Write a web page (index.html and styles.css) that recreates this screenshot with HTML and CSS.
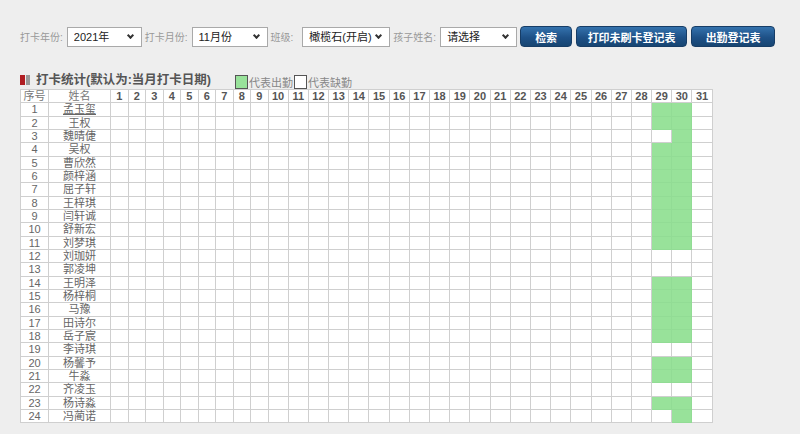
FILE: index.html
```html
<!DOCTYPE html>
<html lang="zh-CN">
<head>
    <meta charset="UTF-8">
    <title>打卡统计</title>
    <link rel="stylesheet" href="styles.css">
</head>
<body>
    <div class="page">
        <div class="search-bar">
            <label>打卡年份:</label>
            <span class="sel sel-year"><select><option>2021年</option></select></span>
            <label>打卡月份:</label>
            <span class="sel sel-month"><select><option>11月份</option></select></span>
            <label class="lbl-class">班级:</label>
            <span class="sel sel-class"><select><option>橄榄石(开启)</option></select></span>
            <label>孩子姓名:</label>
            <span class="sel sel-child"><select><option>请选择</option></select></span>
            <button class="btn btn-search">检索</button>
            <button class="btn btn-print">打印未刷卡登记表</button>
            <button class="btn btn-sheet">出勤登记表</button>
        </div>
        <div class="title-row">
            <span class="title-icon"><i class="red"></i><i class="gray"></i></span>
            <span class="title">打卡统计(默认为:当月打卡日期)</span>
            <span class="legend"><i class="box box-on"></i>代表出勤</span>
            <span class="legend"><i class="box"></i>代表缺勤</span>
        </div>
        <table class="stat" id="stat">
            <thead><tr id="headRow"><th class="c-no">序号</th><th class="c-name">姓名</th></tr></thead>
            <tbody id="statBody"></tbody>
        </table>
    </div>
    <script>
        const names = ['孟玉玺','王权','魏晴倢','吴权','曹欣然','颜梓涵','屈子轩','王梓琪','闫轩诚','舒新宏','刘梦琪','刘珈妍','郭凌坤','王明泽','杨梓桐','马豫','田诗尔','岳子宸','李诗琪','杨馨予','牛淼','齐凌玉','杨诗淼','冯蔺诺'];
        // 29、30号出勤情况
        const d29 = [1,1,0,1,1,1,1,1,1,1,1,0,0,1,1,1,1,1,0,1,1,0,1,0];
        const d30 = [1,1,1,1,1,1,1,1,1,1,1,0,0,1,1,1,1,1,0,1,1,0,1,1];

        const head = document.getElementById('headRow');
        for (let d = 1; d <= 31; d++) {
            const th = document.createElement('th');
            th.textContent = d;
            th.className = d < 10 ? 'c-day1' : 'c-day2';
            head.appendChild(th);
        }

        const body = document.getElementById('statBody');
        names.forEach(function(name, i) {
            const tr = document.createElement('tr');
            let html = '<td>' + (i + 1) + '</td><td>' + (i === 0 ? '<a href="#">' + name + '</a>' : name) + '</td>';
            for (let d = 1; d <= 31; d++) {
                const on = (d === 29 && d29[i]) || (d === 30 && d30[i]);
                html += on ? '<td class="on"></td>' : '<td></td>';
            }
            tr.innerHTML = html;
            body.appendChild(tr);
        });
    </script>
</body>
</html>
```

FILE: styles.css
```css
body {
    margin: 0;
    background-color: #eeeeee;
    font-family: "Liberation Sans", "Noto Sans CJK SC", sans-serif;
}
.page {
    padding: 26px 20px 0 20px;
}
.search-bar {
    display: flex;
    align-items: center;
    height: 21px;
}
.search-bar label {
    font-size: 10px;
    color: #999;
    margin: 0 4px 0 0;
}
.search-bar .lbl-class {
    margin-right: 9px;
}
.sel {
    position: relative;
    display: block;
    height: 20px;
    margin-right: 3px;
}
.sel::after {
    content: "";
    position: absolute;
    right: 9px;
    top: 6px;
    width: 3px;
    height: 3px;
    border-right: 2px solid #333;
    border-bottom: 2px solid #333;
    transform: rotate(45deg);
    pointer-events: none;
}
.sel select {
    appearance: none;
    -webkit-appearance: none;
    width: 100%;
    height: 20px;
    font-family: "Liberation Sans", "Noto Sans CJK SC", sans-serif;
    font-size: 11px;
    color: #222;
    background-color: #fff;
    border: 1px solid #a9a9a9;
    border-radius: 0;
    padding: 0 0 0 6px;
    margin: 0;
}
.sel-year { width: 75px; }
.sel-month { width: 76px; }
.sel-class { width: 88px; }
.sel-child { width: 77px; }
.btn {
    height: 21px;
    border: 1px solid #173d66;
    border-radius: 4px;
    background: linear-gradient(#3472ad, #1e5187 55%, #174572);
    color: #fff;
    font-family: "Liberation Sans", "Noto Sans CJK SC", sans-serif;
    font-size: 11px;
    font-weight: bold;
    padding: 0;
    margin-right: 4px;
}
.btn-search { width: 52px; }
.btn-print { width: 111px; }
.btn-sheet { width: 84px; }

.title-row {
    display: flex;
    align-items: center;
    margin-top: 24px;
    height: 17px;
}
.title-icon {
    display: flex;
    gap: 1px;
    margin-right: 6px;
}
.title-icon i {
    display: block;
    width: 5px;
    height: 10px;
}
.title-icon .red { background-color: #b01e23; }
.title-icon .gray { background-color: #999; width: 4px; }
.title {
    font-size: 12.5px;
    line-height: 14px;
    font-weight: bold;
    color: #555;
    margin-right: 24px;
}
.legend {
    display: flex;
    align-items: flex-end;
    font-size: 11px;
    color: #888;
    margin-right: 1px;
    height: 14px;
    line-height: 12px;
    position: relative;
    top: 2px;
}
.box {
    display: block;
    width: 11px;
    height: 12px;
    border: 1px solid #555;
    background-color: #fff;
    margin-right: 1px;
}
.box-on {
    background-color: #98e29a;
}

.stat {
    border-collapse: collapse;
    table-layout: fixed;
    width: 691px;
    background-color: #fff;
    font-size: 11px;
    color: #666;
    margin-top: 1px;
}
.stat th, .stat td {
    border: 1px solid #cfcfcf;
    height: 12.33px;
    padding: 0;
    line-height: 12px;
    text-align: center;
    overflow: hidden;
    white-space: nowrap;
}
.stat th {
    font-weight: bold;
    color: #555;
}
.stat th.c-no, .stat th.c-name {
    font-weight: normal;
    color: #777;
}
.stat td a {
    color: #666;
    text-decoration: underline;
}
.c-no { width: 27px; }
.c-name { width: 61px; }
.c-day1 { width: 16.5px; }
.c-day2 { width: 19.2px; }
.stat td.on {
    background-color: #98e29a;
    border-color: #92dc95;
}
```
